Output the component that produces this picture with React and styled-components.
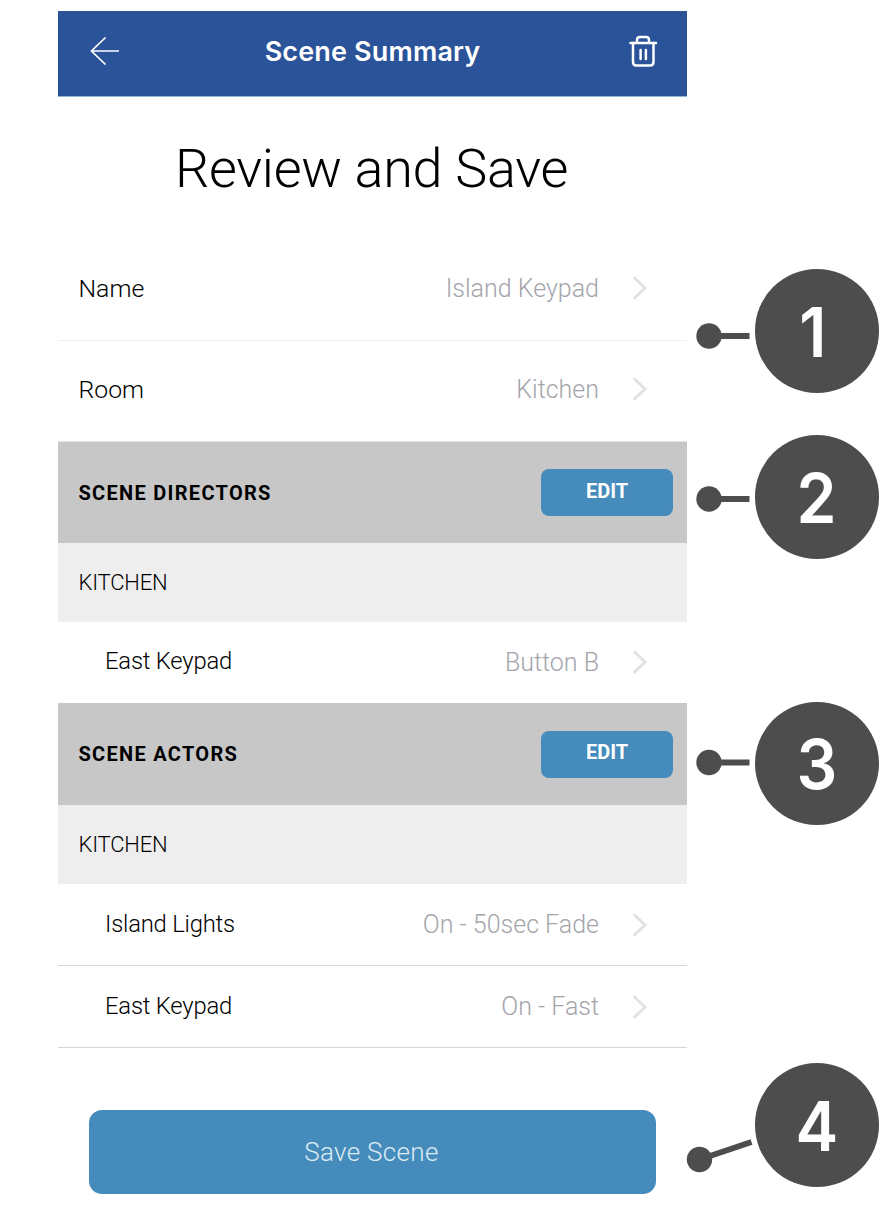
import React from "react";
import styled, { createGlobalStyle } from "styled-components";

const GlobalStyle = createGlobalStyle`
  * {
    box-sizing: border-box;
  }

  body {
    margin: 0;
    background-color: #ffffff;
    font-family: Roboto, "Liberation Sans", sans-serif;
  }
`;

const Page = styled.div`
  position: relative;
  width: 892px;
  height: 1226px;
  padding: 11px 0 0 58px;
  overflow: hidden;
`;

const Screen = styled.main`
  display: flex;
  flex-direction: column;
  width: 629px;
`;

const Header = styled.header`
  display: grid;
  grid-template-columns: 60px 1fr 60px;
  align-items: center;
  height: 86px;
  padding: 0 29px 5px;
  background-color: #2b5399;
  border-bottom: 1px solid #8fb5d3;

  svg {
    display: block;
    fill: none;
    stroke: #ffffff;
  }

  svg:last-child {
    justify-self: end;
  }
`;

const HeaderTitle = styled.h1`
  margin: 0;
  font-family: Inter, sans-serif;
  font-size: 27px;
  font-weight: 600;
  letter-spacing: 0.15px;
  text-align: center;
  white-space: nowrap;
  color: #ffffff;
`;

const Tittle = styled.h2`
  display: flex;
  align-items: center;
  justify-content: center;
  height: 143px;
  margin: 0;
  padding-right: 2px;
  font-size: 54px;
  font-weight: 300;
  letter-spacing: -0.3px;
  color: #000000;
`;

const Row = styled.div`
  display: flex;
  align-items: center;
  height: ${(props) => props.$height}px;
  padding: 0 39px ${(props) => (props.$nested ? 0 : 4)}px
    ${(props) => (props.$nested ? 47 : 20.5)}px;
  border-bottom: 1px solid ${(props) => props.$line || "transparent"};
  font-size: 25px;
  font-weight: 300;
  color: #000000;

  svg {
    fill: none;
    stroke: #e2e2e2;
    stroke-width: 3;
    stroke-linecap: round;
  }
`;

const Label = styled.span`
  flex: 1;
  padding-bottom: ${(props) => (props.$small ? 2 : 0)}px;
  font-size: ${(props) => (props.$small ? 23.8 : 24.8)}px;
  letter-spacing: ${(props) => (props.$small ? -0.2 : 0)}px;
`;

const Value = styled.span`
  margin-right: 33px;
  letter-spacing: 0;
  color: #a3a5ab;
`;

const Section = styled.div`
  display: flex;
  align-items: center;
  justify-content: space-between;
  height: ${(props) => props.$height}px;
  padding: 0 14px 0 20.5px;
  background-color: #c7c7c7;
  font-size: 20px;
  font-weight: 700;
  letter-spacing: 1.3px;
  color: #000000;
`;

const EditButton = styled.button`
  width: 132px;
  height: 47px;
  padding: 0 0 4px;
  border: none;
  border-radius: 8px;
  background-color: #458bbc;
  font-family: inherit;
  font-size: 20px;
  font-weight: 700;
  letter-spacing: 0;
  color: #ffffff;
`;

const RoomName = styled.div`
  display: flex;
  align-items: center;
  height: 79px;
  padding-left: 20.5px;
  background-color: #eeeeee;
  font-size: 22px;
  font-weight: 300;
  letter-spacing: -0.2px;
  color: #000000;
`;

const SaveButton = styled.button`
  height: 84px;
  margin: 62px 31px 0;
  border: none;
  border-radius: 13px;
  background-color: #458bbc;
  font-family: inherit;
  font-size: 26px;
  font-weight: 300;
  letter-spacing: 0.3px;
  padding: 0 8px 0 6px;
  color: #dcebf0;
`;

const Callout = styled.div`
  position: absolute;
  left: 687px;
  top: ${(props) => props.$top}px;
  display: flex;
  gap: 4px;

  svg {
    overflow: visible;
    fill: #4d4d4d;
    stroke: #4d4d4d;
  }
`;

const Badge = styled.div`
  display: flex;
  align-items: center;
  justify-content: center;
  width: 123.5px;
  height: 123.5px;
  padding-top: 2px;
  border-radius: 50%;
  background-color: #4d4d4d;
  font-family: Inter, "Liberation Sans", sans-serif;
  font-size: 69px;
  font-weight: 600;
  color: #ffffff;
`;

const Digit = styled.span`
  padding-right: ${(props) => props.$nudge || 0}px;
  transform: scaleX(0.93);
`;

const Chevron = () => (
  <svg width="16" height="26" viewBox="0 0 16 26">
    <path d="M2.5 3 L13 13 L2.5 23" />
  </svg>
);

const callouts = [
  { number: 1, top: 269, x: 22, y: 67, endX: 62.5, endY: 67, nudge: 9 },
  { number: 2, top: 435, x: 22, y: 64, endX: 62.5, endY: 64 },
  { number: 3, top: 701.5, x: 22, y: 60.5, endX: 62.5, endY: 60.5 },
  { number: 4, top: 1063, x: 12.5, y: 96.5, endX: 64.5, endY: 79 },
];

export default function App() {
  return (
    <Page>
      <GlobalStyle />
      <Screen>
        <Header>
          <svg width="36" height="32" viewBox="0 0 36 32" strokeWidth="1.7">
            <path d="M32 16 H4.5 M18.5 2.5 L4.5 16 L18.5 29.5" />
          </svg>
          <HeaderTitle>Scene Summary</HeaderTitle>
          <svg width="30" height="34" viewBox="0 0 30 34" strokeWidth="2.5" strokeLinecap="round">
            <path d="M2.5 9 H28 M9 8.5 V6 Q9 3 12 3 H18 Q21 3 21 6 V8.5" />
            <path d="M5 9 V28 Q5 31.5 8.5 31.5 H22 Q25.5 31.5 25.5 28 V9 M12.6 16 V25 M17.9 16 V25" />
          </svg>
        </Header>
        <Tittle>Review and Save</Tittle>

        <Row $height={101} $line="#efefef">
          <Label>Name</Label>
          <Value>Island Keypad</Value>
          <Chevron />
        </Row>
        <Row $height={101} $line="#e3e3e3">
          <Label>Room</Label>
          <Value>Kitchen</Value>
          <Chevron />
        </Row>

        <Section $height={101}>
          SCENE DIRECTORS
          <EditButton>EDIT</EditButton>
        </Section>
        <RoomName>KITCHEN</RoomName>
        <Row $height={81} $nested>
          <Label $small>East Keypad</Label>
          <Value>Button B</Value>
          <Chevron />
        </Row>

        <Section $height={102}>
          SCENE ACTORS
          <EditButton>EDIT</EditButton>
        </Section>
        <RoomName>KITCHEN</RoomName>
        <Row $height={82} $nested $line="#d5d5d5">
          <Label $small>Island Lights</Label>
          <Value>On - 50sec Fade</Value>
          <Chevron />
        </Row>
        <Row $height={82} $nested $line="#d5d5d5">
          <Label $small>East Keypad</Label>
          <Value>On - Fast</Value>
          <Chevron />
        </Row>
        <SaveButton>Save Scene</SaveButton>
      </Screen>

      {callouts.map((item) => (
        <Callout key={item.number} $top={item.top}>
          <svg width="64" height="124">
            <circle cx={item.x} cy={item.y} r="12.7" stroke="none" />
            <line x1={item.x} y1={item.y} x2={item.endX} y2={item.endY} strokeWidth="6" />
          </svg>
          <Badge>
            <Digit $nudge={item.nudge}>{item.number}</Digit>
          </Badge>
        </Callout>
      ))}
    </Page>
  );
}
